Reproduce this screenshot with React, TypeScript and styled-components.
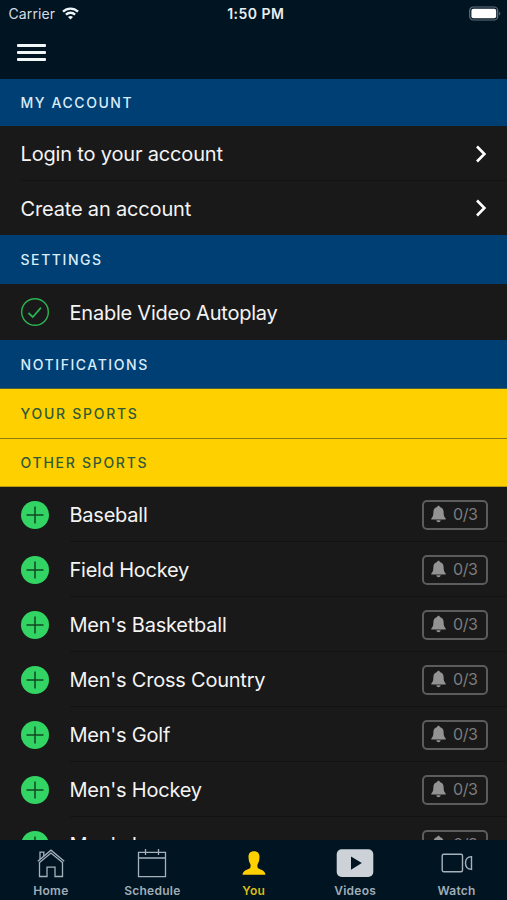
import React from "react";
import styled, { createGlobalStyle } from "styled-components";

const GlobalStyle = createGlobalStyle`
  * { box-sizing: border-box; }
  html, body { margin: 0; background: #191919; overflow: hidden; }
  body { font-family: Inter, "Liberation Sans", sans-serif; }
  svg { display: block; flex: none; }
`;

const Screen = styled.div`
  width: 507px;
  height: 900px;
  display: flex;
  flex-direction: column;
  background: #191919;
  color: #f4f4f4;
  overflow: hidden;
`;

const Header = styled.header`
  flex: none;
  height: 79px;
  background: #001422;
`;

const StatusBar = styled.div`
  display: grid;
  grid-template-columns: 1fr auto 1fr;
  align-items: center;
  height: 27px;
  padding: 0 6px 0 8.5px;
`;

const Carrier = styled.div`
  display: flex;
  align-items: center;
  gap: 6.5px;
  font-size: 14px;
  letter-spacing: 0.12px;
  color: #d5dde3;
`;

const Clock = styled.div`
  font-size: 14px;
  font-weight: 600;
  letter-spacing: 0.45px;
  color: #e8eef2;
  padding-left: 2px;
`;

const Battery = styled.div`
  justify-self: end;
`;

const MenuButton = styled.button`
  display: flex;
  flex-direction: column;
  gap: 4px;
  margin: 17px 0 0 16.5px;
  padding: 0;
  border: 0;
  background: none;
`;

const MenuBar = styled.span`
  width: 29px;
  height: 3px;
  border-radius: 1px;
  background: #f2f7f7;
`;

const Main = styled.main`
  flex: 1;
  min-height: 0;
  overflow: hidden;
`;

const SectionTitle = styled.h2<{ $h: number; $yellow?: boolean; $rule?: string }>`
  display: flex;
  align-items: center;
  height: ${(p) => p.$h}px;
  margin: 0;
  padding-left: 20.5px;
  font-size: 14px;
  font-weight: 500;
  letter-spacing: ${(p) => (p.$yellow ? 1.72 : 1.57)}px;
  color: ${(p) => (p.$yellow ? "#2f5a3a" : "#d9ecfa")};
  background: ${(p) => (p.$yellow ? "#ffd000" : "#003f73")};
  border-bottom: ${(p) => (p.$rule ? `1px solid ${p.$rule}` : "0")};
`;

const Row = styled.div<{ $h: number; $inset?: number }>`
  display: flex;
  align-items: center;
  height: ${(p) => p.$h}px;
  padding: 0 19px 0 21px;
  background: linear-gradient(#121212, #121212) no-repeat
    ${(p) => (p.$inset ? `${p.$inset}px 100% / 100% 1px` : "0 0 / 0 0")};
`;

const Label = styled.span<{ $indent?: boolean }>`
  flex: 1;
  margin-left: ${(p) => (p.$indent ? 20.5 : -0.5)}px;
  padding-top: 1px;
  font-size: 20px;
  line-height: 26px;
  letter-spacing: ${(p) => (p.$indent ? -0.23 : -0.17)}px;
  white-space: nowrap;
`;

const Badge = styled.span`
  display: flex;
  align-items: center;
  gap: 7px;
  width: 66px;
  height: 30px;
  padding: 0 0 1px 7px;
  border: 2px solid #5c5c5c;
  border-radius: 5px;
  color: #7c7c7c;
  font-size: 16px;
  letter-spacing: -0.4px;
`;

const TabBar = styled.nav`
  flex: none;
  display: grid;
  grid-template-columns: repeat(5, 1fr);
  height: 60px;
  background: #001422;
`;

const Tab = styled.div<{ $active?: boolean }>`
  display: flex;
  flex-direction: column;
  align-items: center;
  padding: 8px 0 0 0.5px;
  font-size: 12px;
  font-weight: 600;
  line-height: 16px;
  letter-spacing: 0.25px;
  color: ${(p) => (p.$active ? "#d9bd16" : "#a0adb7")};
  svg { margin-bottom: 5px; }
`;

const WifiIcon = () => (
  <svg width="17" height="13" viewBox="0 0 17 13" fill="none" stroke="#eef4f7" strokeWidth="2.3">
    <path d="M1 4.6C5.2 .5 11.8 .5 16 4.6" />
    <path d="M3.9 7.6c2.6-2.5 6.6-2.5 9.2 0" />
    <path d="M8.5 12.5 6 9.9c1.4-1.3 3.6-1.3 5 0z" fill="#eef4f7" stroke="none" />
  </svg>
);

const BatteryIcon = () => (
  <svg width="32" height="15" viewBox="0 0 32 15">
    <rect x=".7" y="1" width="28" height="13" rx="3.6" fill="none" stroke="#65717a" strokeWidth="1.2" />
    <rect x="2.4" y="2.7" width="24.8" height="9.6" rx="2" fill="#fff" />
    <path d="M30.2 5.4c1.5.8 1.5 3.4 0 4.2z" fill="#65717a" />
  </svg>
);

const Chevron = () => (
  <svg width="14" height="20" viewBox="0 0 14 20" fill="none" stroke="#fff" strokeWidth="2.6">
    <path d="m3 2.5 7.4 7.5L3 17.5" />
  </svg>
);

const CheckIcon = () => (
  <svg width="28" height="28" viewBox="0 0 28 28" fill="none" stroke="#2ab552" strokeWidth="1.4">
    <circle cx="14" cy="14" r="13.3" />
    <path d="m7.4 15 4.4 4L20 9.6" strokeWidth="1.7" />
  </svg>
);

const PlusIcon = () => (
  <svg width="28" height="28" viewBox="0 0 28 28">
    <circle cx="14" cy="14" r="14" fill="#32d563" />
    <path d="M14 5.5v17M5.5 14h17" stroke="#124523" strokeWidth="1.5" />
  </svg>
);

const BellIcon = () => (
  <svg width="15" height="18" viewBox="0 0 15 18" fill="#939393">
    <path d="M7.5.8C8.3.8 8.8 1.3 8.8 2c2.5.6 3.8 2.6 3.8 5 0 3.4.6 5 2.1 6.5v1H.3v-1C1.8 12 2.4 10.4 2.4 7c0-2.4 1.3-4.4 3.8-5 0-.7.5-1.2 1.3-1.2Z" />
    <path d="M5.3 15.3h4.4c-.2 1.2-1 2-2.2 2s-2-.8-2.2-2Z" />
  </svg>
);

const HomeIcon = () => (
  <svg width="30" height="30" viewBox="0 0 30 30" fill="none" stroke="#a5b2bc" strokeWidth="1.3">
    <path d="M1.8 13.2 15 2.2l13.2 11M3.5 14.5 15 5l11.5 9.5" />
    <path d="M3.5 14v14.5H11v-9.3h8v9.3h7.5V14" />
    <path d="M4 11.2v-7h3.8v3.7" />
  </svg>
);

const CalendarIcon = () => (
  <svg width="30" height="30" viewBox="0 0 30 30" fill="none" stroke="#a5b2bc" strokeWidth="1.3">
    <path d="M1.5 4.3h27v24.4h-27zM1.5 10h27M8.5 1v6M21.5 1v6" />
  </svg>
);

const PersonIcon = () => (
  <svg width="30" height="30" viewBox="0 0 30 30" fill="#ffd000">
    <path d="M15 3.2c3.7 0 5.6 2.2 5.5 5.8-.1 3.3-.8 5.4-1.8 7.1-.5 1-.4 3.2.2 4 1.2 1.4 7 1.6 7.600 6.700h-23c.6-5.100 6.400-5.300 7.600-6.700.6-.8.7-3 .2-4-1-1.700-1.700-3.800-1.800-7.100C9.400 5.400 11.300 3.200 15 3.200Z" />
  </svg>
);

const VideoIcon = () => (
  <svg width="38" height="30" viewBox="0 0 38 30">
    <rect x=".7" y="1.3" width="36.6" height="27.7" rx="5" fill="#ccd2d7" />
    <path d="M15 8.5v13.2L25.8 15z" fill="#001422" />
  </svg>
);

const CameraIcon = () => (
  <svg width="32" height="30" viewBox="0 0 32 30" fill="none" stroke="#a5b2bc" strokeWidth="1.4">
    <rect x="1.2" y="6.2" width="20.3" height="17.6" rx="1.5" />
    <path d="M30.5 8.6v12.8c-4.5-.2-6-2.4-6-6.400s1.500-6.200 6-6.400Z" />
  </svg>
);

const sports = [
  "Baseball",
  "Field Hockey",
  "Men's Basketball",
  "Men's Cross Country",
  "Men's Golf",
  "Men's Hockey",
  "Men's Lacrosse",
];

export default function App() {
  return (
    <Screen>
      <GlobalStyle />
      <Header>
        <StatusBar>
          <Carrier>Carrier <WifiIcon /></Carrier>
          <Clock>1:50 PM</Clock>
          <Battery><BatteryIcon /></Battery>
        </StatusBar>
        <MenuButton aria-label="Menu">
          <MenuBar /><MenuBar /><MenuBar />
        </MenuButton>
      </Header>
      <Main>
        <SectionTitle $h={47}>MY ACCOUNT</SectionTitle>
        <Row $h={55} $inset={21}><Label>Login to your account</Label><Chevron /></Row>
        <Row $h={54}><Label>Create an account</Label><Chevron /></Row>
        <SectionTitle $h={49}>SETTINGS</SectionTitle>
        <Row $h={56}><CheckIcon /><Label $indent>Enable Video Autoplay</Label></Row>
        <SectionTitle $h={49} $rule="#47613f">NOTIFICATIONS</SectionTitle>
        <SectionTitle $h={50} $yellow $rule="#8f7a14">YOUR SPORTS</SectionTitle>
        <SectionTitle $h={48} $yellow $rule="#b89a10">OTHER SPORTS</SectionTitle>
        {sports.map((name) => (
          <Row key={name} $h={55} $inset={70}>
            <PlusIcon />
            <Label $indent>{name}</Label>
            <Badge><BellIcon />0/3</Badge>
          </Row>
        ))}
      </Main>
      <TabBar>
        <Tab><HomeIcon />Home</Tab>
        <Tab><CalendarIcon />Schedule</Tab>
        <Tab $active><PersonIcon />You</Tab>
        <Tab><VideoIcon />Videos</Tab>
        <Tab><CameraIcon />Watch</Tab>
      </TabBar>
    </Screen>
  );
}
